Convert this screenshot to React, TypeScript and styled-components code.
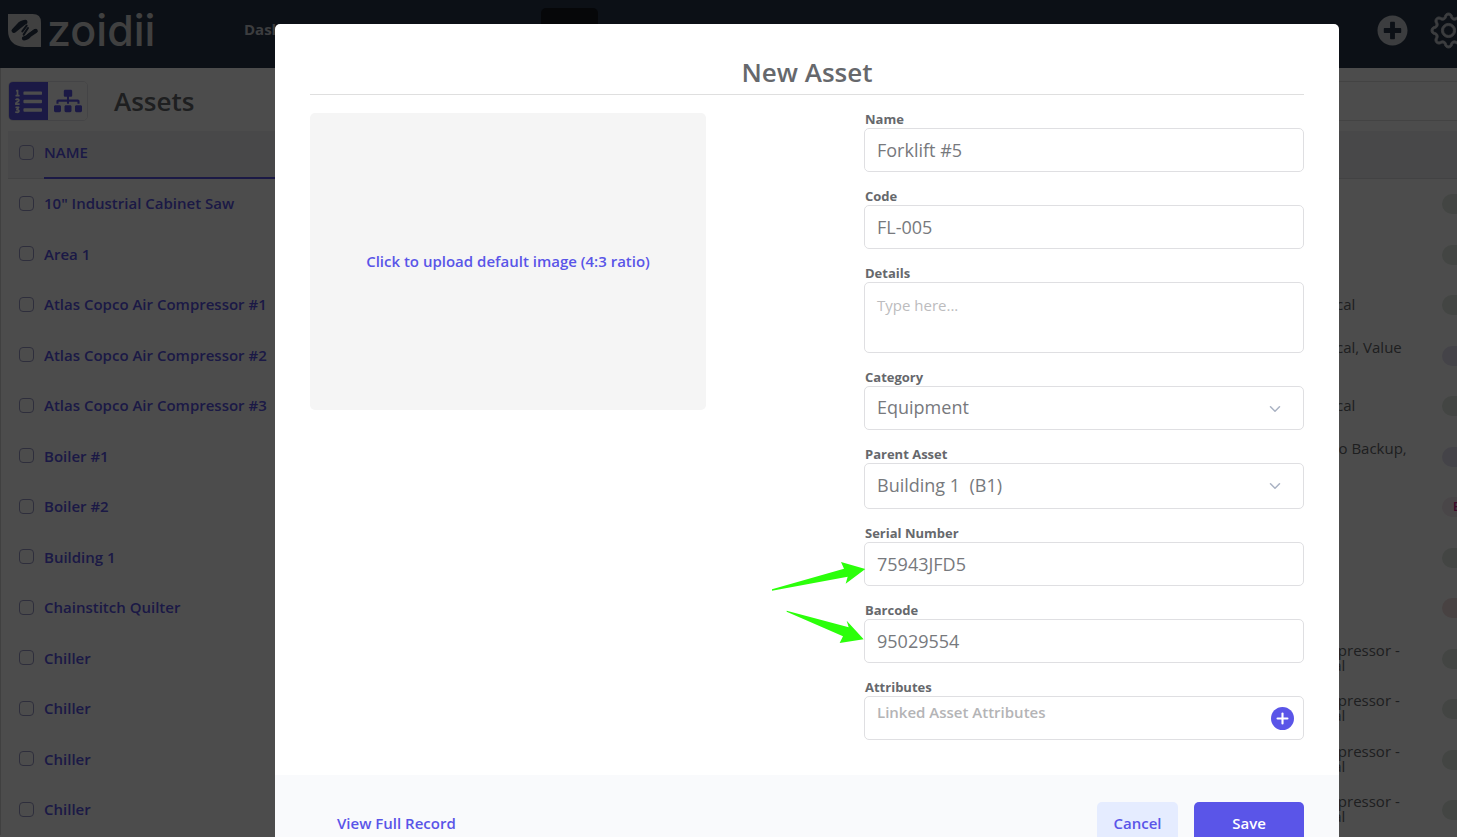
import React from "react";
import styled, { createGlobalStyle, css } from "styled-components";
import { ChevronDown, Plus } from "lucide-react";
import { FaPlusCircle, FaListOl, FaSitemap } from "react-icons/fa";
import { BsGear } from "react-icons/bs";

const GlobalStyle = createGlobalStyle`
  *, *::before, *::after { box-sizing: border-box; }
  body { margin: 0; font-family: "Open Sans", "Noto Sans", sans-serif; color: #66686c; background: #fff; }
  button, input, select, textarea { font-family: inherit; }
`;

const Screen = styled.div`
  position: relative;
  height: 100vh;
  overflow: hidden;
`;

const NavBar = styled.header`
  display: flex;
  align-items: center;
  height: 68px;
  padding: 0 0 8px 8px;
  background: #28364a;
  overflow: hidden;
`;

const Brand = styled.a`
  display: flex;
  align-items: center;
  gap: 6px;
  width: 236px;
  color: #d6d6d6;
  text-decoration: none;
  font-family: Inter, sans-serif;
  font-size: 43px;
  font-weight: 500;
  line-height: 44px;
`;

const NavLinks = styled.nav`
  display: flex;
  flex: 1;
  height: 44px;
`;

const NavLink = styled.a<{ $active?: boolean }>`
  display: flex;
  align-items: center;
  width: ${(p) => (p.$active ? 57 : 99)}px;
  padding-bottom: 2px;
  border-radius: 5px;
  color: #c8ccd2;
  background: ${(p) => (p.$active ? "#141821" : "transparent")};
  font-size: 15px;
  font-weight: 700;
  text-decoration: none;
  overflow: hidden;
`;

const NavActions = styled.div`
  display: flex;
  align-items: center;
  gap: 23px;
  width: 80px;
`;

const IconButton = styled.button`
  display: flex;
  flex: none;
  padding: 0;
  border: 0;
  background: none;
  color: #c8ccd2;
`;

const Page = styled.main`
  padding-left: 7px;
  border-left: 1px solid #d8d8d8;
  background: #fff;
`;

const Toolbar = styled.div`
  display: flex;
  align-items: center;
  height: 63px;
  padding-top: 3px;
`;

const ViewSwitch = styled.div`
  display: flex;
  height: 40px;
  border: 1px solid #e4e4ea;
  border-radius: 5px;
  overflow: hidden;
`;

const ViewButton = styled.button<{ $active?: boolean }>`
  display: flex;
  align-items: center;
  justify-content: center;
  width: 39px;
  padding: 0;
  border: 0;
  color: ${(p) => (p.$active ? "#fff" : "#5a55e8")};
  background: ${(p) => (p.$active ? "#5a55e8" : "#fff")};
`;

const PageTitle = styled.h1`
  flex: 1;
  margin: 0 0 0 26px;
  color: #66686c;
  font-size: 26px;
  font-weight: 600;
`;

const FilterBox = styled.div`
  width: 220px;
  height: 40px;
  border-top: 1px solid #e0e0e0;
  border-bottom: 1px solid #e0e0e0;
`;

const AssetTable = styled.table`
  width: 100%;
  table-layout: fixed;
  border-collapse: separate;
  border-spacing: 0;
`;

const HeadCell = styled.th<{ $width?: number; $sorted?: boolean }>`
  width: ${(p) => (p.$width ? `${p.$width}px` : "auto")};
  height: 48px;
  padding: 0 0 4px;
  background: #f1f1f6;
  border-bottom: ${(p) => (p.$sorted ? "2px solid #5a55e8" : "1px solid #dcdce2")};
  color: #5a55e8;
  font-size: 15px;
  font-weight: 600;
  text-align: left;
`;

const Row = styled.tr`
  height: 50px;
  &:nth-child(even) { height: 51px; }
`;

const Cell = styled.td`
  padding: 0 0 2px;
  overflow: hidden;
  font-size: 15px;
  line-height: 15px;
  white-space: pre;
  &:last-child { padding-bottom: 0; }
`;

const Tick = styled.input`
  appearance: none;
  display: block;
  width: 15px;
  height: 15px;
  margin: 0 0 0 11px;
  border: 1px solid #9c9cc8;
  border-radius: 4px;
`;

const AssetLink = styled.a`
  color: #5a55e8;
  font-size: 15px;
  font-weight: 600;
  line-height: 20px;
  text-decoration: none;
`;

const pillTones = {
  green: css`color: #2f7d3b; background: #dfe8df;`,
  violet: css`color: #5a55e8; background: #e4e2f2;`,
  pink: css`color: #d0208c; background: #f5eaf0;`,
  red: css`color: #c43c3c; background: #f0dede;`,
};

const Pill = styled.span<{ $tone: keyof typeof pillTones }>`
  display: block;
  width: 100px;
  height: 20px;
  padding-left: 11px;
  border-radius: 10px;
  font-size: 12px;
  font-weight: 600;
  line-height: 20px;
  ${(p) => pillTones[p.$tone]}
`;

const Backdrop = styled.div`
  position: absolute;
  inset: 0;
  padding: 24px 118px 0 275px;
  background: rgba(0, 0, 0, 0.7);
`;

const Dialog = styled.form`
  display: flex;
  flex-direction: column;
  border-radius: 5px;
  background: #fff;
  overflow: hidden;
`;

const DialogHeader = styled.header`
  margin: 0 35px;
  padding-top: 30px;
  height: 71px;
  border-bottom: 1px solid #dfdfdf;
`;

const DialogTitle = styled.h2`
  margin: 0;
  font-size: 26px;
  font-weight: 600;
  line-height: 36px;
  text-align: center;
`;

const DialogBody = styled.div`
  display: flex;
  justify-content: space-between;
  align-items: flex-start;
  gap: 40px;
  padding: 16px 35px 35px;
`;

const UploadBox = styled.button`
  width: 396px;
  aspect-ratio: 4 / 3;
  margin-top: 2px;
  padding: 0 0 2px;
  border: 0;
  border-radius: 5px;
  background: #f5f5f5;
  color: #5a55e8;
  font-size: 15px;
  font-weight: 600;
`;

const Fields = styled.div`
  position: relative;
  display: flex;
  flex-direction: column;
  gap: 16px;
  width: 440px;
`;

const Field = styled.div`
  display: flex;
  flex-direction: column;
`;

const Label = styled.label`
  padding-left: 1px;
  font-size: 13px;
  font-weight: 700;
  line-height: 17px;
`;

const control = css`
  width: 100%;
  height: 44px;
  padding: 0 12px;
  border: 1px solid #dfdfe2;
  border-radius: 5px;
  background: #fff;
  color: #77797d;
  font-size: 18px;
  outline: 0;
`;

const TextInput = styled.input`
  ${control}
`;

const TextArea = styled.textarea`
  ${control}
  height: 71px;
  padding: 12px;
  font-size: 15px;
  line-height: 20px;
  resize: none;
  &::placeholder { color: #bcbcbe; }
`;

const SelectBox = styled.div`
  position: relative;
  svg {
    position: absolute;
    top: 14px;
    right: 20px;
    pointer-events: none;
  }
`;

const Select = styled.select<{ $tall?: boolean }>`
  ${control}
  display: block;
  height: ${(p) => (p.$tall ? 46 : 44)}px;
  padding-bottom: 2px;
  appearance: none;
`;

const LinkedBox = styled.div`
  ${control}
  display: flex;
  justify-content: space-between;
  align-items: center;
  padding-right: 9px;
`;

const LinkedText = styled.span`
  margin-bottom: 12px;
  color: #b4b4b6;
  font-size: 15px;
  font-weight: 600;
  line-height: 20px;
`;

const AddButton = styled.button`
  display: flex;
  align-items: center;
  justify-content: center;
  width: 23px;
  height: 23px;
  padding: 0;
  border: 0;
  border-radius: 50%;
  background: #5a55e8;
  color: #fff;
`;

const Arrows = styled.svg`
  position: absolute;
  top: 429px;
  left: -104px;
  pointer-events: none;
`;

const DialogFooter = styled.footer`
  display: flex;
  align-items: center;
  gap: 16px;
  padding: 27px 35px 27px 62px;
  background: #f9fafc;
`;

const RecordLink = styled.a`
  margin-right: auto;
  padding-bottom: 2px;
  color: #5a55e8;
  font-size: 15px;
  font-weight: 600;
  text-decoration: none;
`;

const ActionButton = styled.button<{ $primary?: boolean }>`
  width: ${(p) => (p.$primary ? 110 : 81)}px;
  height: 43px;
  padding: 0 0 2px;
  border: 0;
  border-radius: 5px;
  color: ${(p) => (p.$primary ? "#fff" : "#5a55e8")};
  background: ${(p) => (p.$primary ? "#5a55e8" : "#e5ecff")};
  font-size: 15px;
  font-weight: 600;
`;

type Tone = keyof typeof pillTones;
const assets: { name: string; tags: string; tone: Tone; status?: string }[] = [
  { name: '10" Industrial Cabinet Saw', tags: "", tone: "green" },
  { name: "Area 1", tags: "", tone: "green" },
  { name: "Atlas Copco Air Compressor #1", tags: "Electrical", tone: "green" },
  { name: "Atlas Copco Air Compressor #2", tags: "Electrical, Value\nAdd", tone: "violet" },
  { name: "Atlas Copco Air Compressor #3", tags: "Electrical", tone: "green" },
  { name: "Boiler #1", tags: "Gas, No Backup,\nGas", tone: "violet" },
  { name: "Boiler #2", tags: "", tone: "pink", status: "E" },
  { name: "Building 1", tags: "", tone: "green" },
  { name: "Chainstitch Quilter", tags: "", tone: "red" },
  { name: "Chiller", tags: "2 Compressor -\nManual", tone: "green" },
  { name: "Chiller", tags: "2 Compressor -\nManual", tone: "green" },
  { name: "Chiller", tags: "2 Compressor -\nManual", tone: "green" },
  { name: "Chiller", tags: "2 Compressor -\nManual", tone: "green" },
];

const BrandMark = () => (
  <svg width="33" height="33" viewBox="0 0 99 99" aria-hidden="true">
    <path d="M0 0H74Q99 0 99 25V99H50Q0 96 0 48Z" fill="#d6d6d6" />
    <g fill="none" stroke="#28364a" strokeLinecap="round" strokeLinejoin="round">
      <path d="M17 50L33 33Q40 25 52 24" strokeWidth="13" />
      <path d="M48 73Q58 72 65 63L83 51" strokeWidth="13" />
      <path d="M53 25L20 51M80 50L50 73" strokeWidth="9" />
      <path d="M56 35L43 52M60 42L47 62" strokeWidth="6" />
    </g>
  </svg>
);

export default function App() {
  return (
    <Screen>
      <GlobalStyle />
      <NavBar>
        <Brand href="#">
          <BrandMark />
          <span>zoidii</span>
        </Brand>
        <NavLinks>
          <NavLink href="#">Dashboard</NavLink>
          <NavLink href="#" />
          <NavLink href="#" />
          <NavLink href="#" $active aria-label="Assets" />
        </NavLinks>
        <NavActions>
          <IconButton aria-label="Add"><FaPlusCircle size={31} /></IconButton>
          <IconButton aria-label="Settings">
            <BsGear size={35} stroke="currentColor" strokeWidth="0.4" overflow="visible" />
          </IconButton>
        </NavActions>
      </NavBar>
      <Page>
        <Toolbar>
          <ViewSwitch>
            <ViewButton $active aria-label="List view"><FaListOl size={27} /></ViewButton>
            <ViewButton aria-label="Tree view"><FaSitemap size={28} /></ViewButton>
          </ViewSwitch>
          <PageTitle>Assets</PageTitle>
          <FilterBox />
        </Toolbar>
        <AssetTable>
          <thead>
            <tr>
              <HeadCell $width={36}><Tick type="checkbox" aria-label="Select all" /></HeadCell>
              <HeadCell $sorted $width={400}>NAME</HeadCell>
              <HeadCell />
              <HeadCell $width={149} />
              <HeadCell $width={15} />
            </tr>
          </thead>
          <tbody>
            {assets.map((a, i) => (
              <Row key={i}>
                <Cell><Tick type="checkbox" aria-label={a.name} /></Cell>
                <Cell><AssetLink href="#">{a.name}</AssetLink></Cell>
                <Cell />
                <Cell>{a.tags}</Cell>
                <Cell><Pill $tone={a.tone}>{a.status}</Pill></Cell>
              </Row>
            ))}
          </tbody>
        </AssetTable>
      </Page>
      <Backdrop>
        <Dialog role="dialog" aria-labelledby="dialog-title" onSubmit={(e) => e.preventDefault()}>
          <DialogHeader>
            <DialogTitle id="dialog-title">New Asset</DialogTitle>
          </DialogHeader>
          <DialogBody>
            <UploadBox type="button">Click to upload default image (4:3 ratio)</UploadBox>
            <Fields>
              <Field>
                <Label htmlFor="name">Name</Label>
                <TextInput id="name" defaultValue="Forklift #5" />
              </Field>
              <Field>
                <Label htmlFor="code">Code</Label>
                <TextInput id="code" defaultValue="FL-005" />
              </Field>
              <Field>
                <Label htmlFor="details">Details</Label>
                <TextArea id="details" placeholder="Type here..." />
              </Field>
              <Field>
                <Label htmlFor="category">Category</Label>
                <SelectBox>
                  <Select id="category"><option>Equipment</option></Select>
                  <ChevronDown size={18} color="#a9b2c3" />
                </SelectBox>
              </Field>
              <Field>
                <Label htmlFor="parent">Parent Asset</Label>
                <SelectBox>
                  <Select id="parent" $tall><option>{"Building 1 \u00a0(B1)"}</option></Select>
                  <ChevronDown size={18} color="#a9b2c3" />
                </SelectBox>
              </Field>
              <Field>
                <Label htmlFor="serial">Serial Number</Label>
                <TextInput id="serial" defaultValue="75943JFD5" />
              </Field>
              <Field>
                <Label htmlFor="barcode">Barcode</Label>
                <TextInput id="barcode" defaultValue="95029554" />
              </Field>
              <Field>
                <Label htmlFor="attributes">Attributes</Label>
                <LinkedBox>
                  <LinkedText>Linked Asset Attributes</LinkedText>
                  <AddButton id="attributes" type="button"><Plus size={17} strokeWidth={3} /></AddButton>
                </LinkedBox>
              </Field>
              <Arrows width="110" height="105" viewBox="0 0 330 315" aria-hidden="true">
                <path d="M36 148L252 86L243 66L316 87L257 131L263 110L36 152Z" fill="#2bff0a" />
                <path d="M80 212L266 262L260 242L311 298L239 309L249 289L80 215Z" fill="#2bff0a" />
              </Arrows>
            </Fields>
          </DialogBody>
          <DialogFooter>
            <RecordLink href="#">View Full Record</RecordLink>
            <ActionButton type="button">Cancel</ActionButton>
            <ActionButton type="submit" $primary>Save</ActionButton>
          </DialogFooter>
        </Dialog>
      </Backdrop>
    </Screen>
  );
}
